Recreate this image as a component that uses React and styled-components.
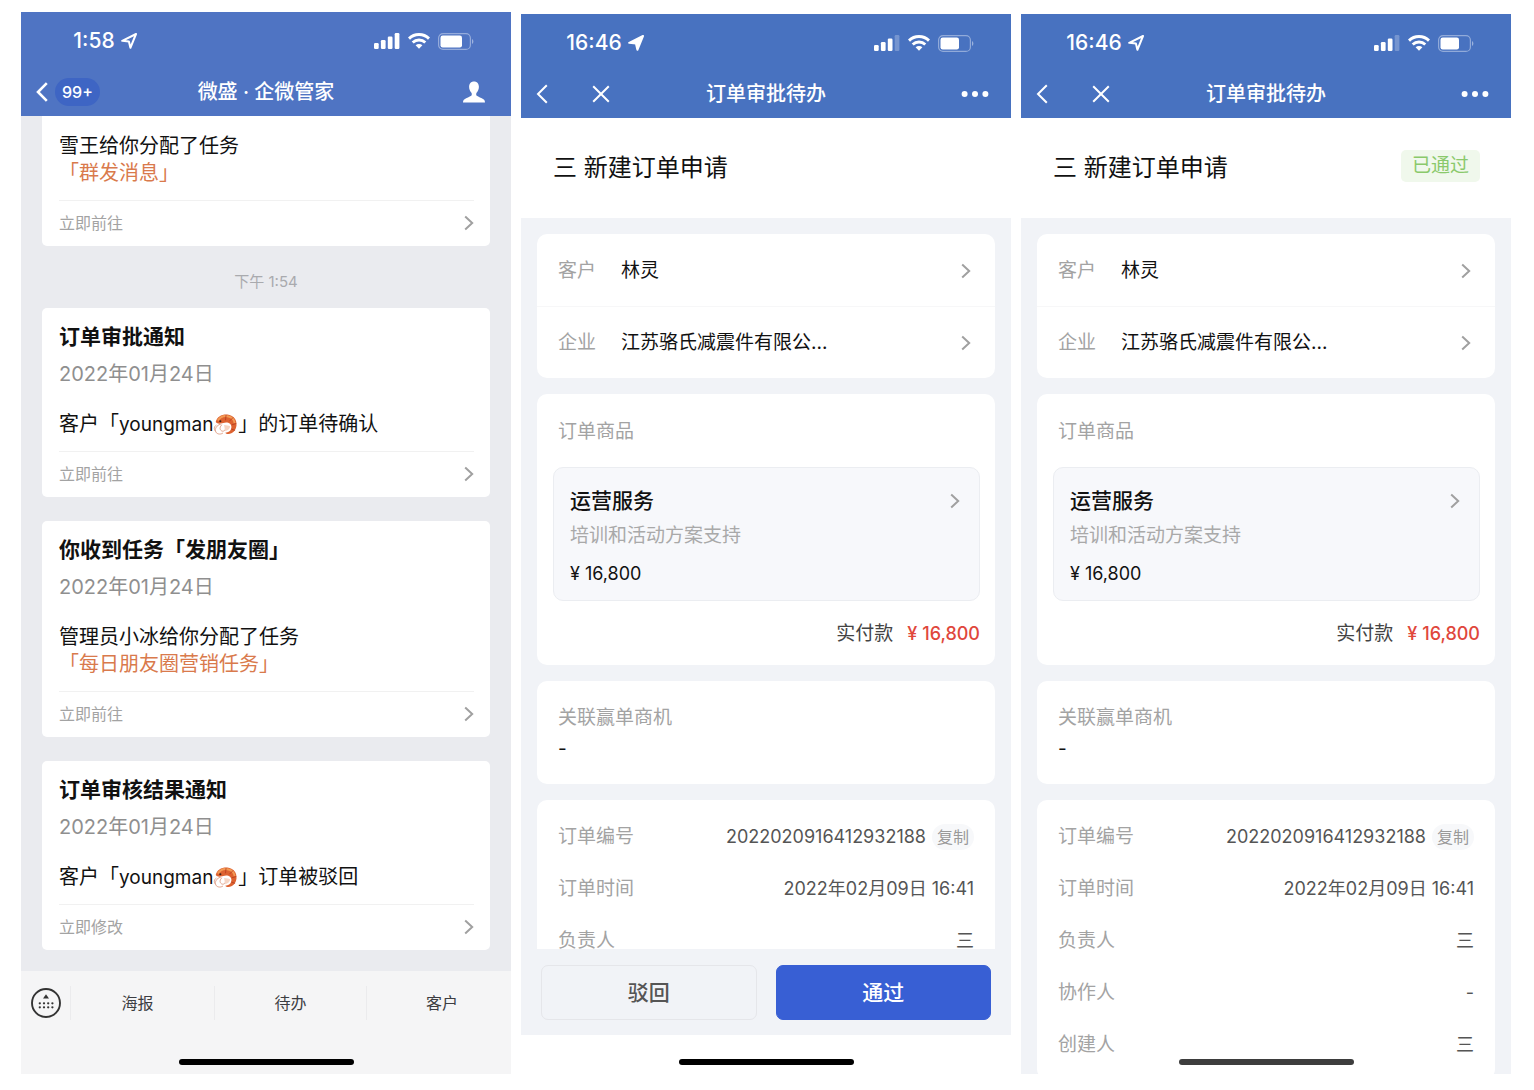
import React from "react";
import styled, { createGlobalStyle } from "styled-components";

const GlobalStyle = createGlobalStyle`
  *, *::before, *::after { box-sizing: border-box; }
  body {
    margin: 0;
    background: #fff;
    color: #111;
    font-family: Inter, "Noto Sans CJK SC", sans-serif;
    font-size: 19px;
    line-height: 28px;
  }
  h1, h2, p, dl, dd, dt { margin: 0; font-weight: 400; }
  button { border: 0; padding: 0; background: none; color: inherit; font: inherit; cursor: pointer; }
  a { color: inherit; text-decoration: none; }
  svg { display: block; flex: none; }
`;

const Page = styled.main`
  display: grid;
  grid-template-columns: repeat(3, minmax(0, 1fr));
  grid-template-rows: minmax(0, 1fr);
  gap: 10px;
  height: 100vh;
  padding: 12px 23px 16px 21px;
`;

const Phone = styled.section`
  position: relative;
  display: flex;
  flex-direction: column;
  min-height: 0;
  overflow: hidden;
  margin-top: ${(p) => (p.$lowered ? "2px" : "0")};
  background: ${(p) => p.$background};
`;

/* ---------- header ---------- */

const Header = styled.header`
  flex: none;
  padding-bottom: 4px;
  background: ${(p) => p.$background};
  color: #fff;
`;

const StatusBar = styled.div`
  display: flex;
  align-items: center;
  justify-content: space-between;
  height: 58px;
  padding-right: 37px;
`;

const Clock = styled.div`
  display: flex;
  align-items: center;
  justify-content: center;
  gap: 6px;
  width: 168px;
  font-size: 21px;
  font-weight: 500;
`;

const StatusIcons = styled.div`
  display: flex;
  align-items: center;
  gap: 8px;
`;

const NavBar = styled.nav`
  display: grid;
  grid-template-columns: 1fr auto 1fr;
  align-items: center;
  height: 44px;
  margin-bottom: -2px;
`;

const NavLeft = styled.div`
  display: flex;
  align-items: center;
  gap: ${(p) => p.$gap}px;
  padding-left: 15px;
`;

const NavRight = styled.div`
  display: flex;
  justify-content: flex-end;
  padding-right: ${(p) => p.$inset}px;
`;

const NavTitle = styled.h1`
  font-size: 20px;
  font-weight: 500;
`;

const Unread = styled.span`
  height: 28px;
  padding: 0 7px;
  border-radius: 14px;
  background: #3e65c4;
  font-size: 16px;
  font-weight: 500;
  line-height: 28px;
`;

/* ---------- chat ---------- */

const Chat = styled.div`
  flex: 1;
  min-height: 0;
  overflow: hidden;
  padding: 0 21px;
`;

const Message = styled.article`
  padding: ${(p) => (p.$cut ? "17px" : "15px")} 16px 1px 17px;
  margin-bottom: ${(p) => (p.$cut ? "0" : "24px")};
  border-radius: ${(p) => (p.$cut ? "0 0 5px 5px" : "5px")};
  background: #fff;
`;

const MessageTitle = styled.h2`
  font-size: 21px;
  font-weight: 700;
`;

const MessageDate = styled.p`
  margin: 9px 0 23px;
  color: #8f8f8f;
  font-size: 20px;
`;

const MessageText = styled.p`
  display: flex;
  align-items: center;
  font-size: 20px;
  line-height: 27px;
  white-space: nowrap;
`;

const Nickname = styled.span`
  display: inline-flex;
  align-items: center;
  font-size: 19px;
`;

const TaskName = styled(MessageText)`
  color: #d97a4c;
`;

const MessageLink = styled.a`
  display: flex;
  align-items: center;
  justify-content: space-between;
  height: 45px;
  margin-top: 13px;
  border-top: 1px solid #f1f1f1;
  color: #a3a3a3;
  font-size: 16px;
`;

const Timestamp = styled.p`
  padding: 24px 0 14px;
  color: #a9aaae;
  font-size: 15px;
  line-height: 24px;
  text-align: center;
`;

const MenuBar = styled.footer`
  display: flex;
  flex: none;
  flex-direction: column;
  justify-content: space-between;
  height: 103px;
  padding: 15px 0 9px;
  background: #f5f5f6;
`;

const Menu = styled.div`
  display: grid;
  grid-template-columns: 50px 144fr 152fr 144fr;
  height: 34px;
`;

const MenuButton = styled.button`
  display: flex;
  align-items: center;
  justify-content: center;
  border-right: 1px solid #ebebed;
  color: #3c3d42;
  font-size: 16px;
  &:nth-child(2) { padding-right: 10px; }
  &:last-child { border-right: 0; padding-left: 6px; }
`;

const HomeIndicator = styled.div`
  flex: none;
  align-self: center;
  width: 175px;
  height: 6px;
  border-radius: 3px;
  background: #000;
`;

const FloatingIndicator = styled(HomeIndicator)`
  position: absolute;
  bottom: 9px;
  left: calc(50% - 87px);
  background: #3d3d3d;
`;

/* ---------- order ---------- */

const TitleRow = styled.div`
  display: flex;
  flex: none;
  align-items: center;
  justify-content: space-between;
  height: 100px;
  padding: 0 31px 0 32px;
  background: #fff;
`;

const OrderTitle = styled.h2`
  font-size: 24px;
`;

const Tag = styled.span`
  height: 32px;
  margin-bottom: 5px;
  padding: 0 11px;
  border-radius: 5px;
  background: #f0f8ec;
  color: #8ac96b;
  line-height: 32px;
`;

const Scroller = styled.div`
  display: flex;
  flex: 1;
  flex-direction: column;
  gap: 16px;
  min-height: 0;
  overflow: hidden;
  padding: 16px 16px 0;
`;

const Card = styled.section`
  flex: none;
  border-radius: 10px;
  background: #fff;
`;

const Label = styled.span`
  color: #a3a3a3;
`;

const PartyRow = styled.a`
  display: grid;
  grid-template-columns: 63px 1fr auto;
  align-items: center;
  height: 72px;
  padding: 1px 24px 0 21px;
  & + & { border-top: 1px solid #f7f7f8; }
`;

const GoodsCard = styled(Card)`
  padding: 24px 15px 0 16px;
`;

const GoodsHeading = styled.p`
  padding: 0 5px;
  margin-bottom: 21px;
  color: #a3a3a3;
`;

const Product = styled.a`
  display: block;
  padding: 19px 19px 12px 16px;
  border: 1px solid #ebedf1;
  border-radius: 10px;
  background: #f7f8fb;
`;

const ProductHead = styled.div`
  display: flex;
  align-items: center;
  justify-content: space-between;
  font-size: 21px;
  font-weight: 500;
`;

const ProductNote = styled.p`
  margin: 7px 0 10px;
  color: #a9a9a9;
`;

const Price = styled.p`
  font-size: 18px;
`;

const Total = styled.p`
  display: flex;
  align-items: center;
  justify-content: flex-end;
  gap: 14px;
  height: 64px;
  padding-top: 2px;
  color: #444;
`;

const TotalPrice = styled.strong`
  color: #e0473c;
  font-size: 18px;
  font-weight: 500;
`;

const DealCard = styled(Card)`
  display: flex;
  flex-direction: column;
  gap: 3px;
  padding: 23px 21px 21px;
`;

const Value = styled.dd`
  display: flex;
  align-items: center;
  gap: 6px;
  color: #555;
  font-size: 18px;
`;

const Details = styled.dl`
  padding: 11px 21px 8px;
`;

const Detail = styled.div`
  display: flex;
  align-items: center;
  justify-content: space-between;
  height: 52px;
`;

const CopyButton = styled.button`
  height: 26px;
  padding: 0 5px;
  border-radius: 13px;
  background: #f7f8fa;
  color: #999;
  font-size: 16px;
  line-height: 26px;
`;

const Actions = styled.div`
  display: grid;
  flex: none;
  grid-template-columns: 1fr 1fr;
  gap: 19px;
  padding: 16px 20px 15px;
`;

const ActionButton = styled.button`
  height: 55px;
  border: 1px solid ${(p) => (p.$primary ? "#385fd4" : "#e5e6ea")};
  border-radius: 7px;
  background: ${(p) => (p.$primary ? "#385fd4" : "#f1f3f7")};
  color: ${(p) => (p.$primary ? "#fff" : "#555")};
  font-size: 21px;
  font-weight: 500;
`;

const HomeArea = styled.div`
  display: flex;
  flex: none;
  flex-direction: column;
  justify-content: flex-end;
  height: 39px;
  padding-bottom: 9px;
  background: #fff;
`;

/* ---------- icons ---------- */

const Chevron = ({ color = "#a0a0a0" }) => (
  <svg width="10" height="16" viewBox="0 0 10 16" fill="none" stroke={color} strokeWidth="2">
    <path d="M1.2 1.4 8.2 8l-7 6.6" />
  </svg>
);

const BackIcon = ({ weight }) => (
  <svg width="12" height="20" viewBox="0 0 12 20" fill="none" stroke="#fff" strokeWidth={weight}>
    <path d="M10.8 1.2 2 10l8.8 8.8" />
  </svg>
);

const CloseIcon = () => (
  <svg width="18" height="18" viewBox="0 0 18 18" fill="none" stroke="#fff" strokeWidth="2">
    <path d="m1.2 1.2 15.6 15.6M16.8 1.2 1.2 16.8" />
  </svg>
);

const MoreIcon = () => (
  <svg width="28" height="8" viewBox="0 0 28 8" fill="#fff">
    <circle cx="3.6" cy="4" r="3" />
    <circle cx="14" cy="4" r="3" />
    <circle cx="24.4" cy="4" r="3" />
  </svg>
);

const PersonIcon = () => (
  <svg width="22" height="22" viewBox="0 0 22 22" fill="#fff">
    <path d="M11 .4c3.100 0 4.900 2.200 4.900 5.400 0 2.500-.9 4.500-2.300 5.900-.6.700-.6 2.500.2 3.100 1.500 1.100 4.800 2.300 6.600 3.500 1.100.7 1.600 1.800 1.600 3.200H0c0-1.400.5-2.500 1.600-3.200 1.800-1.200 5.100-2.400 6.600-3.500.8-.6.8-2.400.2-3.100C7 10.300 6.100 8.300 6.100 5.800 6.100 2.600 7.900.4 11 .4Z" />
  </svg>
);

const LocationIcon = ({ filled }) => (
  <svg width="16" height="16" viewBox="0 0 16 16" fill={filled ? "#fff" : "none"} stroke="#fff" strokeWidth="2" strokeLinejoin="round">
    <path d="M15 1 1.200 7.800l6.700.8 1.500 6.200Z" />
  </svg>
);

const SignalIcon = ({ bars }) => (
  <svg width="26" height="16" viewBox="0 0 26 16" fill="#fff">
    {[6, 9, 12.500, 16].map((h, i) => (
      <rect key={h} x={i * 6.900} y={16 - h} width="4.700" height={h} rx="1.200" opacity={i < bars ? 1 : 0.25} />
    ))}
  </svg>
);

const WifiIcon = () => (
  <svg width="22" height="16" viewBox="0 0 22 16" fill="none" stroke="#fff" strokeWidth="2.900">
    <path d="M1 5.600C6.600.2 15.400.2 21 5.600" />
    <path d="M4.700 9.500c3.500-3.400 9.100-3.400 12.600 0" />
    <path d="M7.600 12.300c1.900-1.700 4.900-1.700 6.800 0L11 15.800Z" fill="#fff" stroke="none" />
  </svg>
);

const BatteryIcon = ({ level }) => (
  <svg width="36" height="17" viewBox="0 0 36 17">
    <rect x=".6" y=".6" width="31.800" height="15.800" rx="4.500" fill="none" stroke="#fff" strokeOpacity=".4" strokeWidth="1.200" />
    <rect x="2.500" y="2.500" width={level} height="12" rx="2.200" fill="#fff" />
    <path d="M34 6c1.800.7 1.800 4.300 0 5Z" fill="#fff" fillOpacity=".45" />
  </svg>
);

const KeypadIcon = () => (
  <svg width="32" height="32" viewBox="0 0 32 32" fill="#333">
    <circle cx="16" cy="16" r="14" fill="none" stroke="#333" strokeWidth="1.900" />
    <path d="m16 7.300 3 4.300h-6Z" />
    {[9.800, 14, 18.200, 22.400].map((x) => (
      <g key={x}>
        <circle cx={x} cy="16.300" r="1.150" />
        <circle cx={x} cy="20.300" r="1.150" />
      </g>
    ))}
  </svg>
);

const ShrimpIcon = () => (
  <svg width="25" height="23" viewBox="0 0 26 24" fill="none">
    <path d="M2.800 9.500C3.600 3.800 9.500 1 15 1.500c6.200.6 10 5.300 9.500 11.300-.5 5.400-4 9-8.600 9.100-1.400 0-2.800-.5-3.100-1.400 3.200-.3 5.500-1.700 6.200-4.400.8-3.200-1-5.700-4.300-6.200-2.700-.4-4.500.8-6.500 1.100-2 .4-4.300.1-5.400-1.500Z" fill="#dd6230" />
    <path d="M5 7.800C8 3.500 12 2.600 16 3.600c4 1 6.200 3.600 6.500 7" stroke="#f39a55" strokeWidth="2" />
    <path d="m17 8.600 4-4M19.600 12.300l4.600-1.300M19 16.600l4 1.600M13 7.600 13.600 2" stroke="#b43a1d" strokeWidth=".8" />
    <path d="M8.500 11.500c-3 .5-6.500 3.200-6 7.100.4 3.300 5 4.400 7.800 2.300M9.500 12c-2.400 2-3 5-.8 6.500 2 1.400 4.600-.4 4.300-2.800M3.500 12.600C1 14 .6 17 2.600 19" stroke="#e0a088" strokeWidth="1" />
    <path d="M11.500 12.500c2.600.8 5 .2 6.400 1.400-.2 2.800-2.500 4.800-5.300 4.900" fill="#f6d5c4" />
    <circle cx="7.600" cy="8.600" r="1.100" fill="#3b2019" />
  </svg>
);

/* ---------- composed parts ---------- */

const Status = ({ time, filled, bars, level }) => (
  <StatusBar>
    <Clock>
      {time}
      <LocationIcon filled={filled} />
    </Clock>
    <StatusIcons>
      <SignalIcon bars={bars} />
      <WifiIcon />
      <BatteryIcon level={level} />
    </StatusIcons>
  </StatusBar>
);

const Notice = ({ title, date, action, cut, children }) => (
  <Message $cut={cut}>
    {title && <MessageTitle>{title}</MessageTitle>}
    {date && <MessageDate>{date}</MessageDate>}
    {children}
    <MessageLink href="#detail">
      {action}
      <Chevron />
    </MessageLink>
  </Message>
);

const parties = [
  ["客户", "林灵"],
  ["企业", "江苏骆氏减震件有限公..."],
];

const details = [
  ["订单编号", "2022020916412932188", true],
  ["订单时间", "2022年02月09日 16:41"],
  ["负责人", "三"],
  ["协作人", "-"],
  ["创建人", "三"],
];

const OrderPhone = ({ approved }) => (
  <Phone $lowered $background="#f1f3f7">
    <Header $background="#4872c0">
      <Status time="16:46" filled={!approved} bars={3} level={18.500} />
      <NavBar>
        <NavLeft $gap={44}>
          <button aria-label="返回"><BackIcon weight={2} /></button>
          <button aria-label="关闭"><CloseIcon /></button>
        </NavLeft>
        <NavTitle>订单审批待办</NavTitle>
        <NavRight $inset={22}>
          <button aria-label="更多"><MoreIcon /></button>
        </NavRight>
      </NavBar>
    </Header>
    <TitleRow>
      <OrderTitle>三 新建订单申请</OrderTitle>
      {approved && <Tag>已通过</Tag>}
    </TitleRow>
    <Scroller>
      <Card>
        {parties.map(([label, name]) => (
          <PartyRow key={label} href="#party">
            <Label>{label}</Label>
            <span>{name}</span>
            <Chevron />
          </PartyRow>
        ))}
      </Card>
      <GoodsCard>
        <GoodsHeading>订单商品</GoodsHeading>
        <Product href="#product">
          <ProductHead>
            运营服务
            <Chevron />
          </ProductHead>
          <ProductNote>培训和活动方案支持</ProductNote>
          <Price>¥ 16,800</Price>
        </Product>
        <Total>
          实付款 <TotalPrice>¥ 16,800</TotalPrice>
        </Total>
      </GoodsCard>
      <DealCard>
        <Label>关联赢单商机</Label>
        <span>-</span>
      </DealCard>
      <Card>
        <Details>
          {(approved ? details : details.slice(0, 3)).map(([label, value, copy]) => (
            <Detail key={label}>
              <Label as="dt">{label}</Label>
              <Value>
                {value}
                {copy && <CopyButton>复制</CopyButton>}
              </Value>
            </Detail>
          ))}
        </Details>
      </Card>
    </Scroller>
    {approved ? (
      <FloatingIndicator />
    ) : (
      <>
        <Actions>
          <ActionButton>驳回</ActionButton>
          <ActionButton $primary>通过</ActionButton>
        </Actions>
        <HomeArea>
          <HomeIndicator />
        </HomeArea>
      </>
    )}
  </Phone>
);

const ChatPhone = () => (
  <Phone $background="#eaebef">
    <Header $background="#4f74c3">
      <Status time="1:58" bars={4} level={21.500} />
      <NavBar>
        <NavLeft $gap={7}>
          <button aria-label="返回"><BackIcon weight={2.6} /></button>
          <Unread>99+</Unread>
        </NavLeft>
        <NavTitle>微盛 · 企微管家</NavTitle>
        <NavRight $inset={26}>
          <button aria-label="个人资料"><PersonIcon /></button>
        </NavRight>
      </NavBar>
    </Header>
    <Chat>
      <Notice cut action="立即前往">
        <MessageText>雪王给你分配了任务</MessageText>
        <TaskName>「群发消息」</TaskName>
      </Notice>
      <Timestamp>下午 1:54</Timestamp>
      <Notice title="订单审批通知" date="2022年01月24日" action="立即前往">
        <MessageText>客户「<Nickname>youngman<ShrimpIcon /></Nickname>」的订单待确认</MessageText>
      </Notice>
      <Notice title="你收到任务「发朋友圈」" date="2022年01月24日" action="立即前往">
        <MessageText>管理员小冰给你分配了任务</MessageText>
        <TaskName>「每日朋友圈营销任务」</TaskName>
      </Notice>
      <Notice title="订单审核结果通知" date="2022年01月24日" action="立即修改">
        <MessageText>客户「<Nickname>youngman<ShrimpIcon /></Nickname>」订单被驳回</MessageText>
      </Notice>
    </Chat>
    <MenuBar>
      <Menu>
        <MenuButton aria-label="键盘"><KeypadIcon /></MenuButton>
        <MenuButton>海报</MenuButton>
        <MenuButton>待办</MenuButton>
        <MenuButton>客户</MenuButton>
      </Menu>
      <HomeIndicator />
    </MenuBar>
  </Phone>
);

export default function App() {
  return (
    <>
      <GlobalStyle />
      <Page>
        <ChatPhone />
        <OrderPhone />
        <OrderPhone approved />
      </Page>
    </>
  );
}
